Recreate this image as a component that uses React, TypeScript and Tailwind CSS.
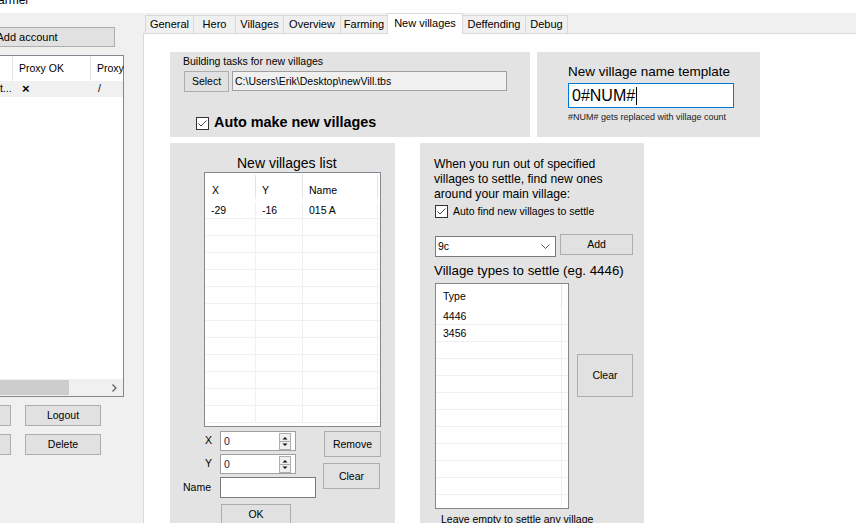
import React from 'react'
import clsx from 'clsx'

const ff = "font-['Liberation_Sans',Arial,sans-serif]"

type Kids = { className?: string; children?: React.ReactNode }

function Btn({ className, children }: Kids) {
  return (
    <div
      className={clsx(
        'flex shrink-0 items-center justify-center border border-[#adadad] bg-[#e1e1e1] text-[10.5px] leading-[13px] text-black',
        className
      )}
    >
      {children}
    </div>
  )
}

function Check({ className }: { className?: string }) {
  return (
    <svg width="13" height="13" viewBox="0 0 13 13" className={clsx('shrink-0', className)}>
      <rect x="0.5" y="0.5" width="12" height="12" fill="#fff" stroke="#333" />
      <path d="M2.5 6.5 L5 9 L10.5 3.5" fill="none" stroke="#444" strokeWidth="1" />
    </svg>
  )
}

function Spin() {
  return (
    <svg width="12" height="17" viewBox="0 0 12 17" className="shrink-0">
      <rect x="0.5" y="0.5" width="11" height="16" fill="#f0f0f0" stroke="#adadad" />
      <line x1="1" y1="8.5" x2="11" y2="8.5" stroke="#adadad" />
      <polygon points="3.5,6.5 8.5,6.5 6,4" fill="#111" />
      <polygon points="3.5,10.5 8.5,10.5 6,13" fill="#111" />
    </svg>
  )
}

function Numeric({ value }: { value: string }) {
  return (
    <div className="flex h-[20px] w-[76px] items-center border border-[#a0a0a0] bg-white pr-[4px]">
      <span className="flex-1 pl-[3px] text-[10.5px] leading-[13px] text-[#1a1a40]">{value}</span>
      <Spin />
    </div>
  )
}

const tabs = [
  { label: 'General', w: 'w-[48px]' },
  { label: 'Hero', w: 'w-[42px]' },
  { label: 'Villages', w: 'w-[48px]' },
  { label: 'Overview', w: 'w-[57px]' },
  { label: 'Farming', w: 'w-[47px]' },
  { label: 'New villages', w: 'w-[76px]', active: true },
  { label: 'Deffending', w: 'w-[62px]', noLeft: true },
  { label: 'Debug', w: 'w-[43px]', last: true },
]

function LeftPanel() {
  return (
    <div className="flex w-[143px] shrink-0 flex-col overflow-hidden">
      <Btn className="ml-[-61px] mt-[14px] h-[20px] w-[176px] text-[11px]">Add account</Btn>

      <div className="ml-[-60px] mt-[8px] flex h-[342px] w-[184px] shrink-0 flex-col border border-[#828790] bg-white">
        <div className="flex h-[25px] shrink-0 items-center">
          <div className="h-full w-[72px] shrink-0 border-r border-[#e5e5e5]" />
          <div className="flex h-full w-[78px] shrink-0 items-center border-r border-[#e5e5e5] pl-[6px]">Proxy OK</div>
          <div className="pl-[6px]">Proxy</div>
        </div>
        <div className="flex h-[16px] shrink-0 items-center bg-[#f0f0f0]">
          <div className="w-[72px] shrink-0 overflow-hidden pr-[2px] text-right whitespace-nowrap">Testaccount t...</div>
          <div className="w-[78px] shrink-0 pl-[9px] text-[13px] leading-[14px] font-bold">×</div>
          <div className="pl-[7px]">/</div>
        </div>
        <div className="flex-1" />
        <div className="flex h-[17px] shrink-0 items-center bg-[#f0f0f0]">
          <div className="w-[17px] shrink-0" />
          <div className="h-[15px] w-[111px] shrink-0 bg-[#cdcdcd]" />
          <div className="flex-1" />
          <div className="flex w-[17px] shrink-0 items-center justify-center">
            <svg width="5" height="8" viewBox="0 0 5 8">
              <path d="M0.5 0.5 L4 4 L0.5 7.5" fill="none" stroke="#606060" strokeWidth="1.3" />
            </svg>
          </div>
        </div>
      </div>

      <div className="mt-[8px] flex gap-[14px]">
        <Btn className="ml-[-65px] h-[21px] w-[76px]">Login</Btn>
        <Btn className="h-[21px] w-[76px]">Logout</Btn>
      </div>
      <div className="mt-[8px] flex gap-[14px]">
        <Btn className="ml-[-65px] h-[21px] w-[76px]">Edit</Btn>
        <Btn className="h-[21px] w-[76px]">Delete</Btn>
      </div>
    </div>
  )
}

function TemplateGroups() {
  return (
    <div className="flex gap-[7px]">
      <div className="flex h-[85px] w-[360px] flex-col bg-[#e3e3e3] pl-[13px] pt-[3px]">
        <div className="leading-[13px]">Building tasks for new villages</div>
        <div className="mt-[3px] flex items-start">
          <Btn className="ml-[1px] h-[21px] w-[45px]">Select</Btn>
          <div className="ml-[3px] flex h-[20px] w-[275px] items-center border border-[#a0a0a0] bg-[#f0f0f0] pl-[2px] leading-[13px]">
            C:\Users\Erik\Desktop\newVill.tbs
          </div>
        </div>
        <div className="ml-[13px] mt-[22px] flex items-start">
          <Check className="mt-[3px]" />
          <span className="ml-[5px] text-[14.4px] leading-[16px] font-bold">Auto make new villages</span>
        </div>
      </div>

      <div className="flex h-[85px] w-[223px] flex-col bg-[#e3e3e3] pl-[31px] pt-[12px]">
        <div className="text-[13.5px] leading-[16px]">New village name template</div>
        <div className="mt-[3px] flex h-[25px] w-[166px] items-center border border-[#0078d7] bg-white pl-[3px]">
          <span className="text-[16px] leading-[18px]">0#NUM#</span>
          <span className="ml-[1px] h-[18px] w-px bg-black" />
        </div>
        <div className="mt-[4px] text-[9px] leading-[11px] text-[#222]">#NUM# gets replaced with village count</div>
      </div>
    </div>
  )
}

function VillagesList() {
  const rows = [{ x: '-29', y: '-16', name: '015 A' }, ...Array.from({ length: 12 }, () => ({ x: '', y: '', name: '' }))]
  return (
    <div className="flex h-full w-[225px] shrink-0 flex-col bg-[#e3e3e3] pt-[12px]">
      <div className="ml-[67px] text-[14px] leading-[16px]">New villages list</div>
      <div className="ml-[34px] mt-[1px] flex h-[255px] w-[177px] shrink-0 flex-col overflow-hidden border border-[#828790] bg-white">
        <div className="flex h-[29px] shrink-0 items-end pb-[3px]">
          <div className="h-[24px] w-[51px] shrink-0 border-r border-[#e5e5e5] pl-[7px] pt-[9px] leading-[13px]">X</div>
          <div className="h-[24px] w-[47px] shrink-0 border-r border-[#e5e5e5] pl-[6px] pt-[9px] leading-[13px]">Y</div>
          <div className="h-[24px] w-[75px] shrink-0 border-r border-[#e5e5e5] pl-[6px] pt-[9px] leading-[13px]">Name</div>
        </div>
        {rows.map((r, i) => (
          <div key={i} className="flex h-[17px] shrink-0 border-b border-[#f0f0f0] leading-[13px]">
            <div className="w-[51px] shrink-0 border-r border-[#f0f0f0] pl-[6px] pt-[2px]">{r.x}</div>
            <div className="w-[47px] shrink-0 border-r border-[#f0f0f0] pl-[6px] pt-[2px]">{r.y}</div>
            <div className="w-[75px] shrink-0 border-r border-[#f0f0f0] pl-[6px] pt-[2px]">{r.name}</div>
          </div>
        ))}
      </div>

      <div className="mt-[4px] flex">
        <div className="flex flex-col">
          <div className="flex h-[20px] items-center">
            <span className="w-[42px] text-right">X</span>
            <div className="ml-[8px]">
              <Numeric value="0" />
            </div>
          </div>
          <div className="mt-[3px] flex h-[20px] items-center">
            <span className="w-[42px] text-right">Y</span>
            <div className="ml-[8px]">
              <Numeric value="0" />
            </div>
          </div>
          <div className="mt-[3px] flex h-[21px] items-center">
            <span className="w-[41px] text-right">Name</span>
            <div className="ml-[9px] h-[21px] w-[96px] border border-[#7a7a7a] bg-white" />
          </div>
          <Btn className="ml-[51px] mt-[6px] h-[21px] w-[70px]">OK</Btn>
        </div>
        <div className="ml-[7px] flex flex-col">
          <Btn className="ml-[1px] h-[26px] w-[57px]">Remove</Btn>
          <Btn className="mt-[6px] h-[26px] w-[57px]">Clear</Btn>
        </div>
      </div>
    </div>
  )
}

function SettleGroup() {
  const types = ['4446', '3456', ...Array.from({ length: 10 }, () => '')]
  return (
    <div className="flex h-full w-[224px] shrink-0 flex-col bg-[#e3e3e3] pl-[14px] pt-[14px]">
      <div className="text-[12.2px] leading-[15px]">
        When you run out of specified
        <br />
        villages to settle, find new ones
        <br />
        around your main village:
      </div>
      <div className="ml-[1px] mt-[3px] flex items-center">
        <Check />
        <span className="ml-[5px] leading-[13px]">Auto find new villages to settle</span>
      </div>
      <div className="mt-[16px] flex items-start">
        <div className="ml-[1px] mt-[2px] flex h-[21px] w-[121px] items-center border border-[#7a7a7a] bg-white pl-[2px] pr-[5px]">
          <span className="flex-1 leading-[13px]">9c</span>
          <svg width="9" height="5" viewBox="0 0 9 5">
            <path d="M0.5 0.5 L4.5 4.5 L8.5 0.5" fill="none" stroke="#555" strokeWidth="1" />
          </svg>
        </div>
        <Btn className="ml-[4px] h-[21px] w-[73px]">Add</Btn>
      </div>
      <div className="mt-[6px] text-[13.3px] leading-[16px]">Village types to settle (eg. 4446)</div>
      <div className="mt-[4px] flex items-start">
        <div className="ml-[1px] flex h-[226px] w-[134px] shrink-0 flex-col overflow-hidden border border-[#828790] bg-white">
          <div className="flex h-[24px] shrink-0">
            <div className="flex w-[126px] shrink-0 items-center border-r border-[#e5e5e5] pl-[7px] leading-[13px]">Type</div>
          </div>
          {types.map((t, i) => (
            <div key={i} className="flex h-[17px] shrink-0 border-b border-[#f0f0f0] leading-[13px]">
              <div className="flex w-[126px] shrink-0 items-center border-r border-[#f0f0f0] pl-[7px]">{t}</div>
            </div>
          ))}
        </div>
        <Btn className="ml-[8px] mt-[71px] h-[43px] w-[56px]">Clear</Btn>
      </div>
      <div className="ml-[7px] mt-[4px] leading-[13px] whitespace-nowrap">Leave empty to settle any village</div>
    </div>
  )
}

function TabControl() {
  return (
    <div className="flex min-w-0 flex-1 flex-col">
      <div className="flex h-[21px] shrink-0 items-end border-b border-[#d9d9d9] pl-[2px]">
        {tabs.map((t) => (
          <div
            key={t.label}
            className={clsx(
              'flex shrink-0 items-center justify-center border-t border-[#d9d9d9] text-[11px] leading-[13px] whitespace-nowrap',
              t.w,
              t.noLeft ? 'border-l-0' : 'border-l',
              (t.last || t.active) && 'border-r',
              t.active ? '-mb-px h-[21px] bg-white pb-[2px]' : 'h-[18px] bg-[#f0f0f0]'
            )}
          >
            {t.label}
          </div>
        ))}
      </div>
      <div className="flex min-h-0 flex-1 flex-col border-l border-[#d9d9d9] bg-white pl-[26px] pt-[18px]">
        <TemplateGroups />
        <div className="mt-[6px] flex min-h-0 flex-1 gap-[25px]">
          <VillagesList />
          <SettleGroup />
        </div>
      </div>
    </div>
  )
}

export default function App() {
  return (
    <div className={clsx(ff, 'flex h-[523px] w-[856px] flex-col overflow-hidden bg-[#f0f0f0] text-[10.5px] text-black')}>
      <div className="h-[13px] shrink-0 overflow-hidden bg-white">
        <div className="-ml-[2px] -mt-[7px] text-[12px] leading-[14px]">armer</div>
      </div>
      <div className="flex min-h-0 flex-1">
        <LeftPanel />
        <TabControl />
      </div>
    </div>
  )
}
